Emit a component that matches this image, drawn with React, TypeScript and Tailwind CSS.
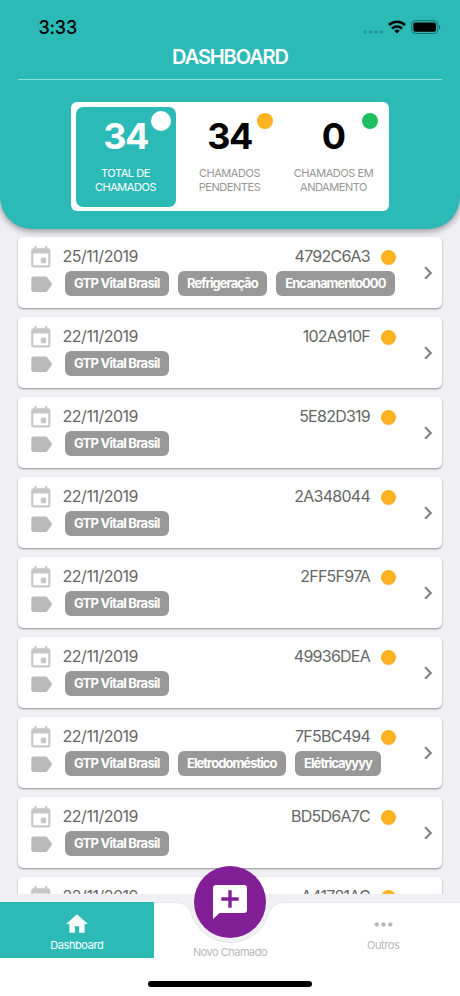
import { MdChevronRight, MdEvent, MdHome, MdLabel, MdMoreHoriz } from "react-icons/md";

type Ticket = {
  date: string;
  code: string;
  tags: string[];
};

const tickets: Ticket[] = [
  { date: "25/11/2019", code: "4792C6A3", tags: ["GTP Vital Brasil", "Refrigeração", "Encanamento000"] },
  { date: "22/11/2019", code: "102A910F", tags: ["GTP Vital Brasil"] },
  { date: "22/11/2019", code: "5E82D319", tags: ["GTP Vital Brasil"] },
  { date: "22/11/2019", code: "2A348044", tags: ["GTP Vital Brasil"] },
  { date: "22/11/2019", code: "2FF5F97A", tags: ["GTP Vital Brasil"] },
  { date: "22/11/2019", code: "49936DEA", tags: ["GTP Vital Brasil"] },
  { date: "22/11/2019", code: "7F5BC494", tags: ["GTP Vital Brasil", "Eletrodoméstico", "Elétricayyyy"] },
  { date: "22/11/2019", code: "BD5D6A7C", tags: ["GTP Vital Brasil"] },
  { date: "22/11/2019", code: "A41781AC", tags: ["GTP Vital Brasil"] },
];

function StatusBar() {
  return (
    <div className="flex h-[45px] items-start justify-between pt-[17px] pr-[19px] pl-[38.5px]">
      <span className="text-[18px] leading-[22px] font-medium tracking-[-0.2px] text-black">3:33</span>
      <div className="flex items-center pt-[3px]">
        <svg width="22" height="14" viewBox="0 0 22 14" fill="#239793">
          <circle cx="3" cy="12" r="1.8" />
          <circle cx="8.5" cy="12" r="1.8" />
          <circle cx="14" cy="12" r="1.8" />
          <circle cx="19.5" cy="12" r="1.8" />
        </svg>
        <svg className="ml-[4px]" width="18" height="14" viewBox="0 0 18 14" fill="none" stroke="black" strokeWidth="2.6">
          <path d="M1 5a11.4 11.4 0 0 1 16 0" />
          <path d="M4 8.5a7.2 7.2 0 0 1 10 0" />
          <path d="M6.4 10.8a3.6 3.6 0 0 1 5.2 0L9 13.6z" fill="black" stroke="none" />
        </svg>
        <svg className="ml-[5px]" width="30" height="14" viewBox="0 0 30 14">
          <rect x="0.7" y="0.7" width="26" height="12.8" rx="3.6" fill="none" stroke="#17706d" />
          <rect x="2.4" y="2.4" width="22.6" height="9.4" rx="1.8" fill="black" />
          <path d="M28 5v4.4c1.7-.6 1.7-3.8 0-4.4z" fill="#17706d" />
        </svg>
      </div>
    </div>
  );
}

function Summary() {
  return (
    <div className="mx-auto mt-[22px] flex h-[109px] w-[318px] rounded-[6px] bg-white p-[4.5px] text-center">
      {/* Total */}
      <div className="relative w-[100px] rounded-[7px] bg-[#2cbab7] text-white">
        <p className="pt-[8px] text-[36px] leading-[42px] font-bold tracking-[-1.6px]">34</p>
        <p className="mt-[10.5px] text-[11px] leading-[13.5px] tracking-[-0.45px]">TOTAL DE<br />CHAMADOS</p>
        <span className="absolute top-[4px] right-[5px] size-[20px] rounded-full bg-white" />
      </div>
      {/* Pendentes */}
      <div className="relative ml-[4px] w-[100px] text-[#979797]">
        <p className="pt-[8px] text-[36px] leading-[42px] font-bold tracking-[-1.6px] text-black">34</p>
        <p className="mt-[10.5px] text-[11px] leading-[13.5px] tracking-[-0.45px]">CHAMADOS<br />PENDENTES</p>
        <span className="absolute top-[6px] right-[6.5px] size-[16px] rounded-full bg-[#ffb321]" />
      </div>
      {/* Em andamento */}
      <div className="relative ml-[4px] w-[100px] text-[#979797]">
        <p className="pt-[8px] pl-[1px] text-[36px] leading-[42px] font-bold text-black">0</p>
        <p className="mt-[10.5px] text-[11px] leading-[13.5px] tracking-[-0.45px]">CHAMADOS EM<br />ANDAMENTO</p>
        <span className="absolute top-[6px] right-[6px] size-[16px] rounded-full bg-[#1fbe60]" />
      </div>
    </div>
  );
}

function TicketCard({ ticket }: { ticket: Ticket }) {
  return (
    <div className="flex h-[71px] shrink-0 rounded-[5px] bg-white shadow-[0_1px_2px_rgba(0,0,0,0.4)]">
      <div className="flex w-[378px] flex-col pl-[9.5px]">
        <div className="flex h-[33px] items-center pt-[7px]">
          <MdEvent className="mt-[1px] size-[25.6px] shrink-0 text-[#c7c7c7]" />
          <span className="-mt-[2px] ml-[9.5px] text-[16px] leading-[20px] tracking-[-0.5px] text-[#666]">{ticket.date}</span>
          <span className="-mt-[2px] ml-auto text-[16px] leading-[20px] tracking-[-0.75px] text-[#666]">{ticket.code}</span>
          <span className="ml-[11px] size-[15px] rounded-full bg-[#ffb321]" />
        </div>
        <div className="mt-[1px] flex h-[25px] items-center">
          <MdLabel className="mt-[1px] size-[26.5px] shrink-0 text-[#b9b9b9]" />
          <div className="ml-[11px] flex gap-[9px]">
            {ticket.tags.map((tag) => (
              <span
                key={tag}
                className="h-[25px] rounded-[6px] bg-[#989898] pr-[9.5px] pl-[9px] text-[13px] leading-[25px] font-bold tracking-[-0.95px] whitespace-nowrap text-white first:tracking-[-0.74px]"
              >
                {tag}
              </span>
            ))}
          </div>
        </div>
      </div>
      <MdChevronRight className="mt-[22.5px] ml-[19px] size-[26px] shrink-0 text-[#858585]" />
    </div>
  );
}

function TabBar() {
  return (
    <nav className="relative h-[94px] shrink-0">
      {/* White bar with the round notch */}
      <svg className="absolute inset-0" width="460" height="94" viewBox="0 0 460 94">
        <path
          d="M-2 0.5H174C184 0.5 188 4 191 11A40.5 40.5 0 0 0 269 11C272 4 276 0.5 286 0.5H462V96H-2Z"
          fill="white"
          stroke="#e9e9ed"
        />
      </svg>
      <div className="relative flex h-[56px] text-[11px] leading-[14px] tracking-[-0.4px] text-[#b8b8b8]">
        <div className="flex w-[153.5px] flex-col items-center bg-[#2cbab7] pt-[9px] text-white">
          <MdHome className="size-[26px]" />
          <span className="mt-[1px]">Dashboard</span>
        </div>
        <div className="flex w-[153px] flex-col items-center">
          <button className="-mt-[36px] flex size-[72px] shrink-0 items-center justify-center rounded-full bg-[#821e96]">
            <svg width="34" height="34" viewBox="0 0 34 34">
              <path d="M3 0h28a3 3 0 0 1 3 3v22a3 3 0 0 1-3 3H6.5L0 34V3a3 3 0 0 1 3-3z" fill="white" />
              <path d="M17 5.3v17.4M8.3 14h17.4" stroke="#821e96" strokeWidth="3.4" />
            </svg>
          </button>
          <span className="mt-[7px] tracking-[-0.5px]">Novo Chamado</span>
        </div>
        <div className="flex flex-1 flex-col items-center pt-[9px]">
          <MdMoreHoriz className="size-[27px]" />
          <span>Outros</span>
        </div>
      </div>
      <div className="relative mx-auto mt-[23px] h-[6px] w-[164px] rounded-full bg-black" />
    </nav>
  );
}

export default function App() {
  return (
    <div className="flex h-[996px] w-[460px] flex-col overflow-hidden bg-[#efeff4] font-['Inter',sans-serif]">
      <header className="relative z-10 h-[229px] shrink-0 rounded-b-[32px] bg-[#2cbab7] shadow-[0_2px_7px_rgba(0,0,0,0.4)]">
        <StatusBar />
        <div className="mx-[18px] h-[35px] border-b border-[#8fe0dd] text-center">
          <h1 className="text-[20px] leading-[24px] font-semibold tracking-[-1.1px] text-white">DASHBOARD</h1>
        </div>
        <Summary />
      </header>
      <main className="flex h-[665px] shrink-0 flex-col gap-[9px] overflow-hidden px-[18px] pt-[8px]">
        {tickets.map((ticket) => (
          <TicketCard key={ticket.code} ticket={ticket} />
        ))}
      </main>
      <div className="h-[8px] shrink-0" />
      <TabBar />
    </div>
  );
}
